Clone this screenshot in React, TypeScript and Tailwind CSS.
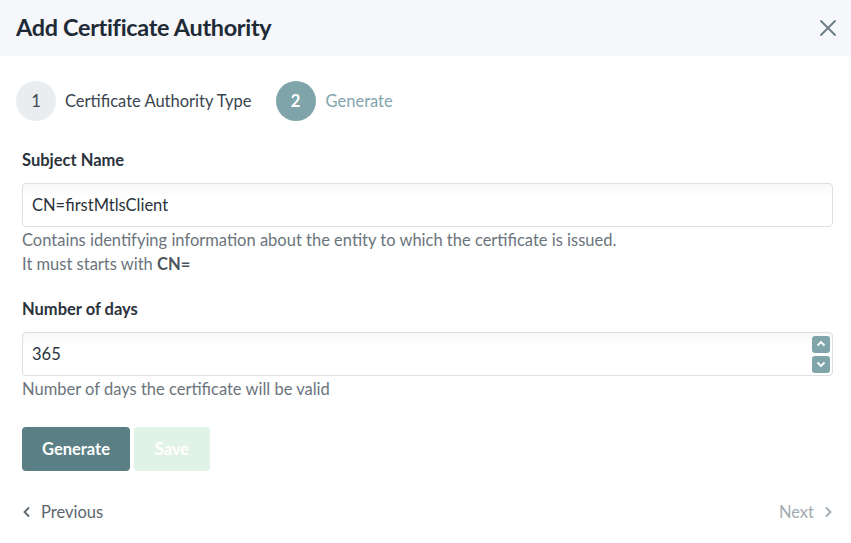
import React from "react";

const font = { fontFamily: "Lato, 'Noto Sans', sans-serif" };

export default function App() {
  return (
    <div className="w-[851px] h-[543px] bg-white flex flex-col text-[#3a4550]" style={font}>
      <div className="h-[56px] bg-[#f5f7fa] flex items-center justify-between pl-4 pr-[14px] shrink-0">
        <h1 className="text-[23.4px] font-bold text-[#1e2a36] tracking-[-0.3px]">Add Certificate Authority</h1>
        <svg width="18" height="18" viewBox="0 0 18 18" className="text-[#6b7c88]">
          <path d="M2 2L16 16M16 2L2 16" stroke="currentColor" strokeWidth="1.8" strokeLinecap="round" />
        </svg>
      </div>
      <div className="flex items-center pl-4 pt-[25px]">
        <div className="w-10 h-10 rounded-full bg-[#e9edf0] flex items-center justify-center text-[16.5px] text-[#3f4a55]">1</div>
        <span className="ml-[9px] text-[16.5px] text-[#3a4550]">Certificate Authority Type</span>
        <div className="ml-6 w-10 h-10 rounded-full bg-[#7fa5ab] flex items-center justify-center text-[16.5px] text-white font-bold">2</div>
        <span className="ml-[10px] text-[16.5px] text-[#7fa5ab]">Generate</span>
      </div>
      <div className="px-[22px] pr-[18px] flex flex-col">
        <label className="mt-[27px] text-[16.5px] font-bold text-[#2a333c] leading-[24px]">Subject Name</label>
        <div className="mt-[11px] h-[44px] rounded-[4px] border border-[#dcdfe3] bg-gradient-to-b from-[#f7f8f9] to-white to-[30%] flex items-center px-[9px] text-[16.5px] text-[#2a333c]">
          CN=firstMtlsClient
        </div>
        <p className="mt-[1px] text-[16.5px] text-[#6b747c] leading-[24px]">
          Contains identifying information about the entity to which the certificate is issued.
        </p>
        <p className="text-[16.5px] text-[#6b747c] leading-[24px]">
          It must starts with <b className="text-[#4a545d]">CN=</b>
        </p>
        <label className="mt-[21px] text-[16.5px] font-bold text-[#2a333c] leading-[24px]">Number of days</label>
        <div className="mt-[11px] h-[44px] rounded-[4px] border border-[#dcdfe3] bg-gradient-to-b from-[#f7f8f9] to-white to-[30%] flex items-center justify-between pl-[9px] pr-[2px] text-[16.5px] text-[#2a333c]">
          <span>365</span>
          <div className="flex flex-col gap-[3px]">
            <div className="w-[18px] h-[17px] rounded-[3px] bg-[#7fa5ab] flex items-center justify-center">
              <svg width="10" height="10" viewBox="0 0 10 10"><path d="M1.5 6.5L5 3L8.5 6.5" stroke="white" strokeWidth="1.8" fill="none" /></svg>
            </div>
            <div className="w-[18px] h-[17px] rounded-[3px] bg-[#7fa5ab] flex items-center justify-center">
              <svg width="10" height="10" viewBox="0 0 10 10"><path d="M1.5 3.5L5 7L8.5 3.5" stroke="white" strokeWidth="1.8" fill="none" /></svg>
            </div>
          </div>
        </div>
        <p className="mt-[1px] text-[16.5px] text-[#6b747c] leading-[24px]">Number of days the certificate will be valid</p>
        <div className="mt-[26px] flex gap-1">
          <button className="w-[108px] h-[44px] rounded-[4px] bg-[#5a7f85] text-white font-bold text-[16.5px]">Generate</button>
          <button className="w-[76px] h-[44px] rounded-[4px] bg-[#e1f3e6] text-white font-bold text-[16.5px]">Save</button>
        </div>
        <div className="mt-[29px] flex justify-between items-center text-[16.5px]">
          <div className="flex items-center gap-[9px] text-[#5b656e]">
            <svg width="10" height="12" viewBox="0 0 10 12"><path d="M7 1.5L2.5 6L7 10.5" stroke="currentColor" strokeWidth="1.8" fill="none" /></svg>
            <span>Previous</span>
          </div>
          <div className="flex items-center gap-[9px] text-[#a3abb2]">
            <span>Next</span>
            <svg width="10" height="12" viewBox="0 0 10 12"><path d="M3 1.5L7.5 6L3 10.5" stroke="currentColor" strokeWidth="1.8" fill="none" /></svg>
          </div>
        </div>
      </div>
    </div>
  );
}
